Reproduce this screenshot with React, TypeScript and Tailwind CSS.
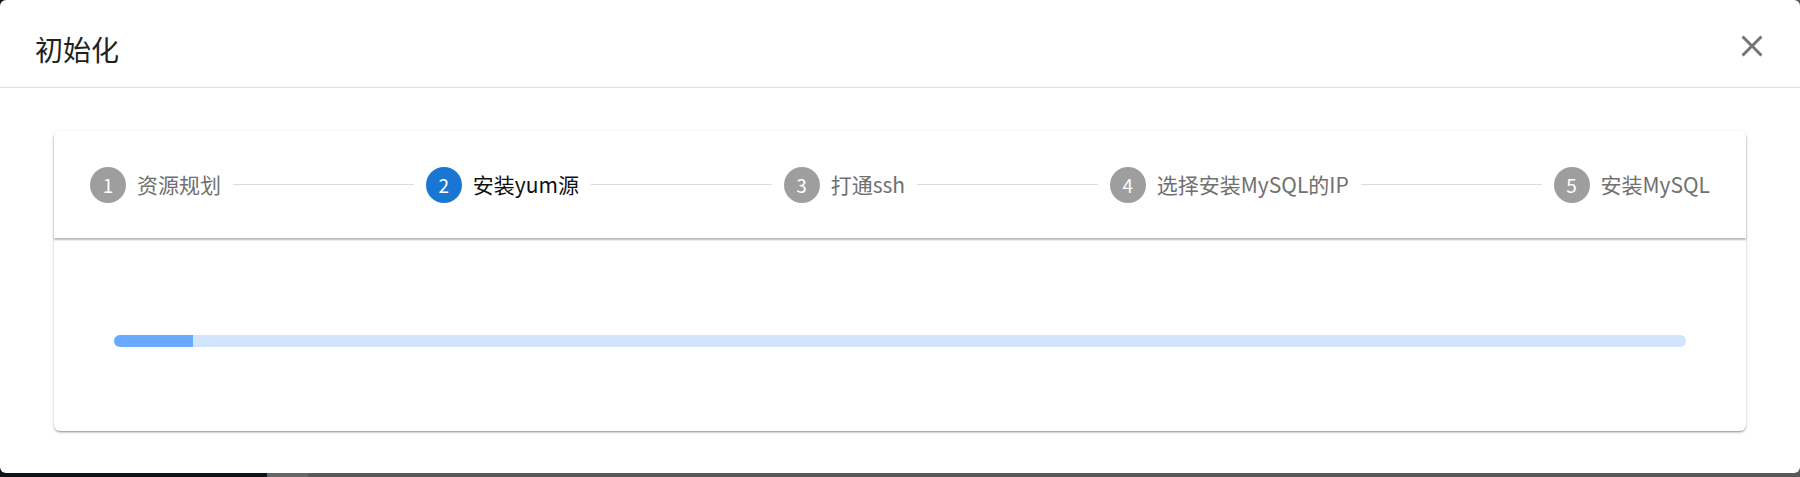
import React from 'react';

const steps = ['资源规划', '安装yum源', '打通ssh', '选择安装MySQL的IP', '安装MySQL'];
const activeStep = 1;
const progress = 5;

const font = { fontFamily: '"Noto Sans CJK SC", "Noto Sans", sans-serif' };

const CloseIcon: React.FC = () => (
  <svg width="36" height="36" viewBox="0 0 24 24" fill="#757575">
    <path d="M19 6.41 17.59 5 12 10.59 6.41 5 5 6.41 10.59 12 5 17.59 6.41 19 12 13.41 17.59 19 19 17.59 13.41 12z" />
  </svg>
);

const App: React.FC = () => {
  return (
    <div className="relative w-[1800px] h-[477px] overflow-hidden" style={font}>
      {/* page behind the modal */}
      <div className="flex h-full">
        <div className="w-[267px] bg-[#0e1419]"></div>
        <div className="w-[41px] bg-[#666666]"></div>
        <div className="flex-1 bg-[#595959]"></div>
      </div>

      <div className="absolute left-0 top-0 w-full h-[473px] bg-white rounded-[6px] flex flex-col">
        <header className="h-[88px] flex items-center justify-between pl-[35px] pr-[26px] border-b border-[#e0e0e0]">
          <h2 className="text-[28px] leading-none text-[#222] pt-[10px]">初始化</h2>
          <button className="w-[44px] h-[44px] mt-[4px] flex items-center justify-center">
            <CloseIcon />
          </button>
        </header>

        <div className="flex-1 px-[54px] pt-[43px] pb-[42px]">
          <div className="h-full bg-white rounded-[6px] shadow-[0_2px_2px_-1px_rgba(0,0,0,0.25),0_1px_2px_rgba(0,0,0,0.14),0_1px_4px_rgba(0,0,0,0.12)] flex flex-col">
            <div className="relative z-10 h-[107px] px-[24px] flex items-center rounded-t-[6px] bg-white shadow-[0_2px_2px_rgba(0,0,0,0.28)]">
              {steps.map((label, i) => {
                const active = i === activeStep;
                return (
                  <React.Fragment key={label}>
                    {i > 0 && <div className="flex-1 border-t border-[#dcdcdc]"></div>}
                    <div className="flex items-center gap-[11px] px-[12px]">
                      <span
                        className={`w-[36px] h-[36px] rounded-full flex items-center justify-center text-[19px] leading-none text-white ${
                          active ? 'bg-[#1976d2]' : 'bg-[#9e9e9e]'
                        }`}
                      >
                        {i + 1}
                      </span>
                      <span
                        className={`text-[21px] leading-none whitespace-nowrap ${
                          active ? 'text-[#111]' : 'text-[#707070]'
                        }`}
                      >
                        {label}
                      </span>
                    </div>
                  </React.Fragment>
                );
              })}
            </div>

            <div className="flex-1 px-[60px] pt-[97px]">
              <div className="h-[12px] rounded-full bg-[#d2e5fd] overflow-hidden">
                <div className="h-full bg-[#68aaff]" style={{ width: `${progress}%` }}></div>
              </div>
            </div>
          </div>
        </div>
      </div>
    </div>
  );
};

export default App;
